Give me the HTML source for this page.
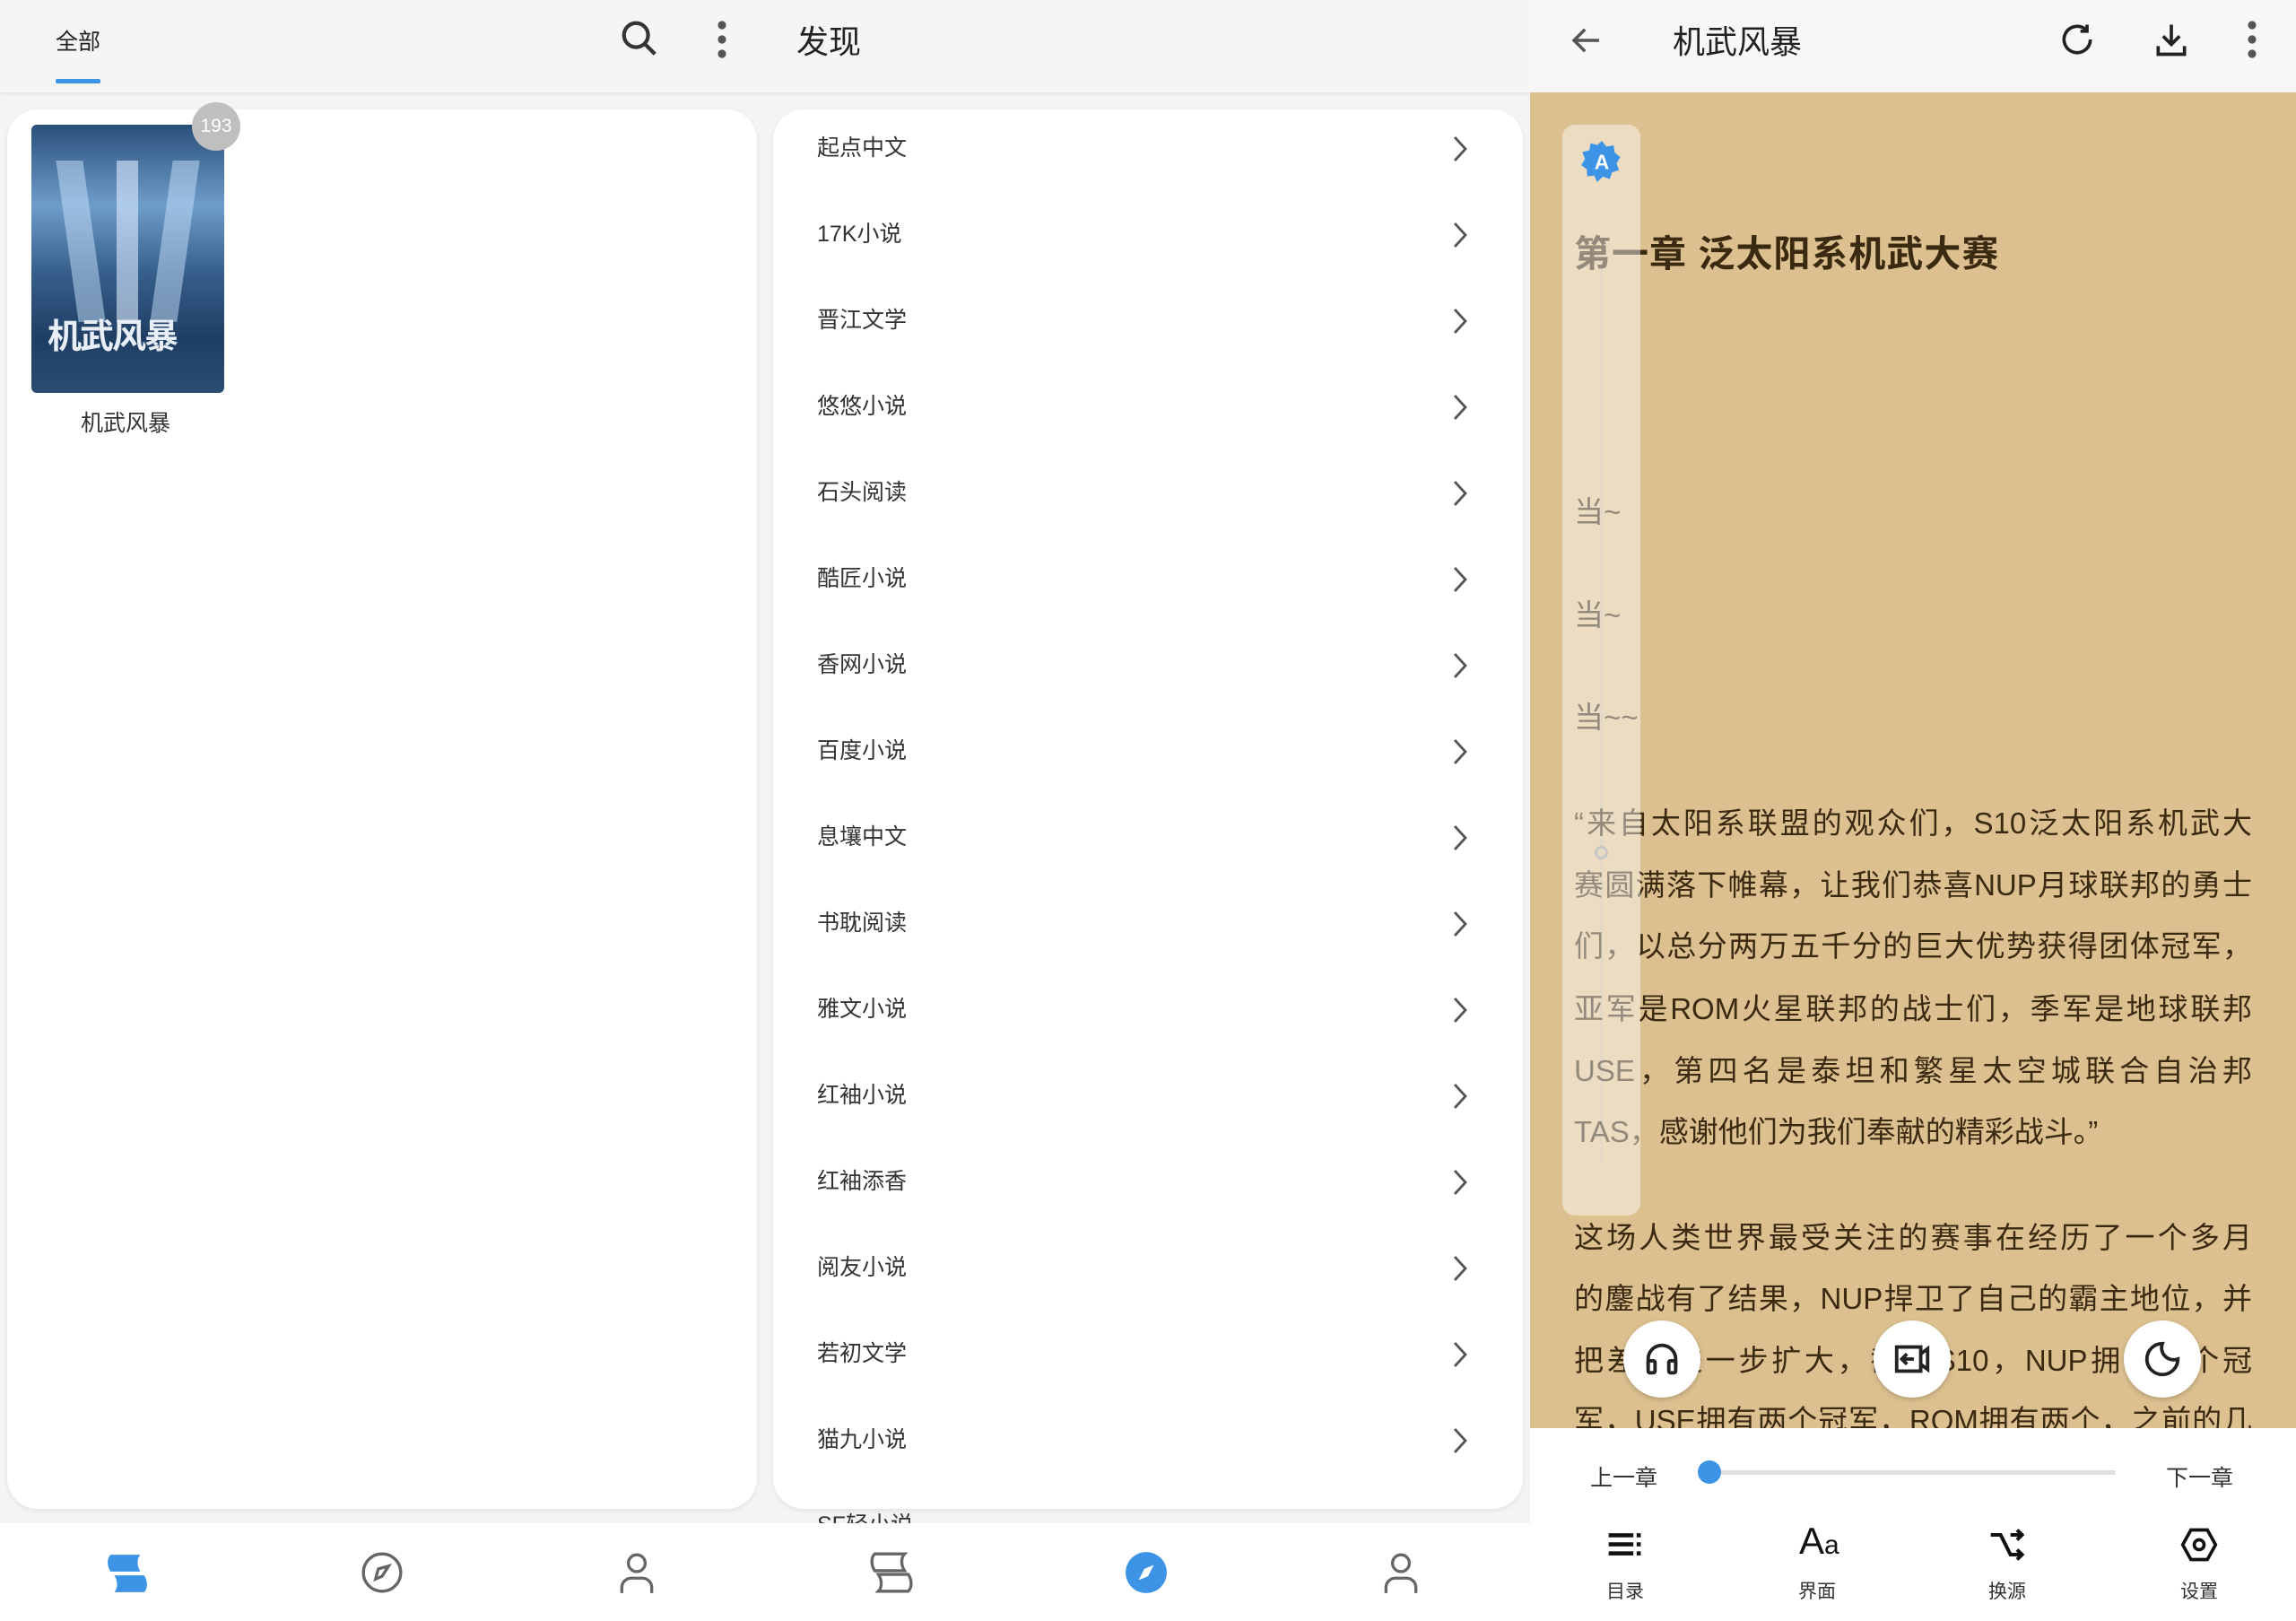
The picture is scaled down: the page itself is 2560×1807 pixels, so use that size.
<!DOCTYPE html>
<html><head><meta charset="utf-8"><style>
*{margin:0;padding:0;box-sizing:border-box}
body{width:2560px;height:1807px;overflow:hidden;background:#f4f4f4;font-family:"Liberation Sans","Noto Sans CJK SC",sans-serif;position:relative;color:#333}
.abs{position:absolute}
.card{position:absolute;background:#fff;border-radius:34px;box-shadow:0 2px 6px rgba(0,0,0,.08)}
.item{position:absolute;left:911px;font-size:25px;color:#333;line-height:30px}
.chev{position:absolute;left:1620px}
.tan{position:absolute;left:1706px;top:103px;width:854px;height:1489px;background:#dcc08f;overflow:hidden}
.ln{position:absolute;left:49px;width:756px;font-size:33px;line-height:40px;color:#3b2a12;text-align:justify;text-align-last:justify;white-space:normal}
.fab{position:absolute;width:86px;height:86px;border-radius:50%;background:#fff;box-shadow:0 2px 6px rgba(0,0,0,.2)}
.lbl{position:absolute;font-size:21px;color:#333;transform:translateX(-50%)}
</style></head><body>
<!-- top bars -->
<div class="abs" style="left:0;top:0;width:1706px;height:103px;background:#f5f5f5;box-shadow:0 2px 4px rgba(0,0,0,.06)"></div>
<div class="abs" style="left:62px;top:27px;font-size:25px;color:#222">全部</div>
<div class="abs" style="left:62px;top:88px;width:50px;height:5px;background:#3d94e6;border-radius:2px"></div>
<svg class="abs" style="left:690px;top:20px" width="46" height="46" viewBox="0 0 24 24" fill="none" stroke="#333" stroke-width="2.2"><circle cx="10" cy="10" r="7"/><path d="M15 15l6 6"/></svg>
<svg class="abs" style="left:795px;top:22px" width="20" height="44" viewBox="0 0 10 22" fill="#555"><circle cx="5" cy="3" r="2.3"/><circle cx="5" cy="11" r="2.3"/><circle cx="5" cy="19" r="2.3"/></svg>
<div class="abs" style="left:888px;top:18px;font-size:36px;color:#222">发现</div>

<div class="abs" style="left:1706px;top:0;width:854px;height:103px;background:#f7f7f7"></div>
<svg class="abs" style="left:1748px;top:24px" width="42" height="42" viewBox="0 0 24 24" fill="none" stroke="#555" stroke-width="2"><path d="M20 12H4M11 5l-7 7 7 7"/></svg>
<div class="abs" style="left:1865px;top:18px;font-size:36px;color:#222">机武风暴</div>
<svg class="abs" style="left:2294px;top:22px" width="44" height="44" viewBox="0 0 24 24" fill="none" stroke="#222" stroke-width="2"><path d="M20 12a8 8 0 1 1-2.5-5.8"/><path d="M18 3v4h-4" /></svg>
<svg class="abs" style="left:2399px;top:22px" width="44" height="44" viewBox="0 0 24 24" fill="none" stroke="#222" stroke-width="2"><path d="M12 3v12M7 10l5 5 5-5M4 16v5h16v-5"/></svg>
<svg class="abs" style="left:2501px;top:22px" width="20" height="44" viewBox="0 0 10 22" fill="#555"><circle cx="5" cy="3" r="2.3"/><circle cx="5" cy="11" r="2.3"/><circle cx="5" cy="19" r="2.3"/></svg>

<!-- left card -->
<div class="card" style="left:8px;top:122px;width:836px;height:1560px"></div>
<div class="abs" style="left:35px;top:139px;width:215px;height:299px;border-radius:6px;background:linear-gradient(180deg,#2a4f7a 0%,#6e9ccb 30%,#375f8c 55%,#1f3e63 80%,#2b4d72 100%);overflow:hidden">
<div class="abs" style="left:40px;top:40px;width:30px;height:180px;background:rgba(200,225,250,.5);transform:skewX(8deg)"></div>
<div class="abs" style="left:95px;top:40px;width:24px;height:180px;background:rgba(220,235,255,.6)"></div>
<div class="abs" style="left:145px;top:40px;width:30px;height:180px;background:rgba(200,225,250,.5);transform:skewX(-8deg)"></div>
<div class="abs" style="left:18px;top:205px;font-size:38px;font-weight:bold;color:#e8eef6;letter-spacing:-2px">机武风暴</div>
</div>
<div class="abs" style="left:214px;top:114px;width:54px;height:54px;border-radius:50%;background:#bfbfbf;color:#fff;font-size:21px;text-align:center;line-height:54px">193</div>
<div class="abs" style="left:90px;top:452px;font-size:25px;color:#333">机武风暴</div>

<!-- right list card -->
<div class="item" style="top:1685px">SF轻小说</div>
<div class="card" style="left:862px;top:122px;width:836px;height:1560px"></div>

<!-- bottom nav -->
<div class="abs" style="left:0;top:1698px;width:1706px;height:109px;background:#fff"></div>
<svg class="abs" style="left:117px;top:1729px" width="50" height="50" viewBox="0 0 24 24" fill="#3d94e6"><path d="M3 2h16c-2 2-2 6 0 9H3c-2-3-2-7 0-9zM5 13h16c2 3 2 7 0 9H5c2-2 2-6 0-9z"/></svg>
<svg class="abs" style="left:401px;top:1728px" width="50" height="50" viewBox="0 0 24 24" fill="none" stroke="#666" stroke-width="1.6"><circle cx="12" cy="12" r="10"/><path d="M15.5 8.5L12 14l-3.5 1.5L10 10z"/></svg>
<svg class="abs" style="left:685px;top:1728px" width="50" height="50" viewBox="0 0 24 24" fill="none" stroke="#666" stroke-width="1.6"><circle cx="12" cy="7" r="4.5"/><path d="M4 23v-3a5 5 0 0 1 5-5h6a5 5 0 0 1 5 5v3"/></svg>
<svg class="abs" style="left:969px;top:1728px" width="50" height="50" viewBox="0 0 24 24" fill="none" stroke="#666" stroke-width="1.6"><path d="M3 2h16c-2 2-2 6 0 9H3c-2-3-2-7 0-9zM5 13h16c2 3 2 7 0 9H5c2-2 2-6 0-9z"/></svg>
<svg class="abs" style="left:1253px;top:1728px" width="50" height="50" viewBox="0 0 24 24"><circle cx="12" cy="12" r="11" fill="#3d94e6"/><path d="M16 8l-3 6-5 2 3-6z" fill="#fff"/></svg>
<svg class="abs" style="left:1537px;top:1728px" width="50" height="50" viewBox="0 0 24 24" fill="none" stroke="#666" stroke-width="1.6"><circle cx="12" cy="7" r="4.5"/><path d="M4 23v-3a5 5 0 0 1 5-5h6a5 5 0 0 1 5 5v3"/></svg>

<!-- reader -->
<div class="tan">
<div class="abs" style="left:78px;top:190px;width:3px;height:1000px;background:rgba(190,180,160,.5)"></div>
<div class="abs" style="left:72px;top:840px;width:15px;height:15px;border-radius:50%;border:3px solid #999"></div>
<div class="abs" style="left:49px;top:146px;font-size:41px;font-weight:bold;color:#3b2a12;letter-spacing:1px">第一章 泛太阳系机武大赛</div>
<div class="abs" style="left:49px;top:441px;font-size:33px;color:#3b2a12">当~</div>
<div class="abs" style="left:49px;top:556px;font-size:33px;color:#3b2a12">当~</div>
<div class="abs" style="left:49px;top:670px;font-size:33px;color:#3b2a12">当~~</div>
<div class="ln" style="top:795px">“来自太阳系联盟的观众们，S10泛太阳系机武大</div>
<div class="ln" style="top:864px">赛圆满落下帷幕，让我们恭喜NUP月球联邦的勇士</div>
<div class="ln" style="top:932px">们，以总分两万五千分的巨大优势获得团体冠军，</div>
<div class="ln" style="top:1002px">亚军是ROM火星联邦的战士们，季军是地球联邦</div>
<div class="ln" style="top:1071px">USE，第四名是泰坦和繁星太空城联合自治邦</div>
<div class="ln" style="top:1139px;text-align:left;text-align-last:left">TAS，感谢他们为我们奉献的精彩战斗。”</div>
<div class="ln" style="top:1257px">这场人类世界最受关注的赛事在经历了一个多月</div>
<div class="ln" style="top:1325px">的鏖战有了结果，NUP捍卫了自己的霸主地位，并</div>
<div class="ln" style="top:1394px">把差距进一步扩大，截至S10，NUP拥有三个冠</div>
<div class="ln" style="top:1461px">军，USE拥有两个冠军，ROM拥有两个，之前的几</div>
<div class="abs" style="left:36px;top:36px;width:87px;height:1216px;border-radius:14px;background:rgba(255,255,255,.45)"></div>
<svg class="abs" style="left:55px;top:52px" width="50" height="50" viewBox="0 0 24 24"><path d="M12 1l2.5 3 3.8-.6.6 3.8 3 2.5-2 3.3 1.3 3.6-3.7 1.2-1.3 3.6-3.6-1.3L9.5 23l-1.6-3.5L4.2 20l-.2-3.8L1 14l2-3.3L1.6 7l3.7-1L6 2.2l3.6 1z" fill="#3d94e6"/><text x="12" y="16" font-size="11" font-family="Liberation Sans" font-weight="bold" fill="#fff" text-anchor="middle">A</text></svg>
</div>
<div class="fab" style="left:1810px;top:1472px"><svg style="margin:20px" width="46" height="46" viewBox="0 0 24 24" fill="none" stroke="#222" stroke-width="2"><path d="M4 17v-5a8 8 0 0 1 16 0v5"/><rect x="4" y="13" width="4" height="7" rx="1"/><rect x="16" y="13" width="4" height="7" rx="1"/></svg></div>
<div class="fab" style="left:2089px;top:1472px"><svg style="margin:20px" width="46" height="46" viewBox="0 0 24 24" fill="none" stroke="#222" stroke-width="2"><path d="M3 5h14v14H3zM17 9l4-3v12l-4-3"/><path d="M13 12H7M9 9l-3 3 3 3"/></svg></div>
<div class="fab" style="left:2368px;top:1472px"><svg style="margin:20px" width="46" height="46" viewBox="0 0 24 24" fill="none" stroke="#222" stroke-width="2"><path d="M12 3a9 9 0 1 0 9 9 7 7 0 0 1-9-9z"/></svg></div>

<div class="abs" style="left:1706px;top:1592px;width:854px;height:215px;background:#fff"></div>
<div class="abs" style="left:1773px;top:1628px;font-size:25px;color:#333">上一章</div>
<div class="abs" style="left:1907px;top:1639px;width:452px;height:5px;background:#e0e0e0;border-radius:3px"></div>
<div class="abs" style="left:1893px;top:1628px;width:26px;height:26px;border-radius:50%;background:#3d94e6"></div>
<div class="abs" style="left:2415px;top:1628px;font-size:25px;color:#333">下一章</div>
<svg class="abs" style="left:1790px;top:1700px" width="44" height="44" viewBox="0 0 24 24" fill="#111"><rect x="2" y="5" width="15" height="2.5"/><rect x="2" y="10.5" width="15" height="2.5"/><rect x="2" y="16" width="15" height="2.5"/><rect x="19" y="5" width="2.5" height="2.5"/><rect x="19" y="10.5" width="2.5" height="2.5"/><rect x="19" y="16" width="2.5" height="2.5"/></svg>
<div class="abs" style="left:2006px;top:1694px;font-size:42px;color:#111;font-family:'Liberation Sans Narrow','Liberation Sans',sans-serif">A<span style="font-size:30px">a</span></div>
<svg class="abs" style="left:2216px;top:1700px" width="44" height="44" viewBox="0 0 24 24" fill="none" stroke="#111" stroke-width="2.2"><path d="M2 6h6l6 12h7M14 6h7M18 3l3 3-3 3M18 15l3 3-3 3"/></svg>
<svg class="abs" style="left:2430px;top:1700px" width="44" height="44" viewBox="0 0 24 24" fill="none" stroke="#111" stroke-width="2"><path d="M7 3h10l5 9-5 9H7l-5-9z"/><circle cx="12" cy="12" r="3"/></svg>
<div class="lbl" style="left:1812px;top:1758px">目录</div>
<div class="lbl" style="left:2026px;top:1758px">界面</div>
<div class="lbl" style="left:2238px;top:1758px">换源</div>
<div class="lbl" style="left:2452px;top:1758px">设置</div>

<div class="item" style="top:150px">起点中文</div>
<div class="item" style="top:246px">17K小说</div>
<div class="item" style="top:342px">晋江文学</div>
<div class="item" style="top:438px">悠悠小说</div>
<div class="item" style="top:534px">石头阅读</div>
<div class="item" style="top:630px">酷匠小说</div>
<div class="item" style="top:726px">香网小说</div>
<div class="item" style="top:822px">百度小说</div>
<div class="item" style="top:918px">息壤中文</div>
<div class="item" style="top:1014px">书耽阅读</div>
<div class="item" style="top:1110px">雅文小说</div>
<div class="item" style="top:1206px">红袖小说</div>
<div class="item" style="top:1302px">红袖添香</div>
<div class="item" style="top:1398px">阅友小说</div>
<div class="item" style="top:1494px">若初文学</div>
<div class="item" style="top:1590px">猫九小说</div>
<svg class="chev" style="top:151px" width="18" height="30" viewBox="0 0 9 15" fill="none" stroke="#555" stroke-width="1.4"><path d="M1 1l6 6.5L1 14"/></svg>
<svg class="chev" style="top:247px" width="18" height="30" viewBox="0 0 9 15" fill="none" stroke="#555" stroke-width="1.4"><path d="M1 1l6 6.5L1 14"/></svg>
<svg class="chev" style="top:343px" width="18" height="30" viewBox="0 0 9 15" fill="none" stroke="#555" stroke-width="1.4"><path d="M1 1l6 6.5L1 14"/></svg>
<svg class="chev" style="top:439px" width="18" height="30" viewBox="0 0 9 15" fill="none" stroke="#555" stroke-width="1.4"><path d="M1 1l6 6.5L1 14"/></svg>
<svg class="chev" style="top:535px" width="18" height="30" viewBox="0 0 9 15" fill="none" stroke="#555" stroke-width="1.4"><path d="M1 1l6 6.5L1 14"/></svg>
<svg class="chev" style="top:631px" width="18" height="30" viewBox="0 0 9 15" fill="none" stroke="#555" stroke-width="1.4"><path d="M1 1l6 6.5L1 14"/></svg>
<svg class="chev" style="top:727px" width="18" height="30" viewBox="0 0 9 15" fill="none" stroke="#555" stroke-width="1.4"><path d="M1 1l6 6.5L1 14"/></svg>
<svg class="chev" style="top:823px" width="18" height="30" viewBox="0 0 9 15" fill="none" stroke="#555" stroke-width="1.4"><path d="M1 1l6 6.5L1 14"/></svg>
<svg class="chev" style="top:919px" width="18" height="30" viewBox="0 0 9 15" fill="none" stroke="#555" stroke-width="1.4"><path d="M1 1l6 6.5L1 14"/></svg>
<svg class="chev" style="top:1015px" width="18" height="30" viewBox="0 0 9 15" fill="none" stroke="#555" stroke-width="1.4"><path d="M1 1l6 6.5L1 14"/></svg>
<svg class="chev" style="top:1111px" width="18" height="30" viewBox="0 0 9 15" fill="none" stroke="#555" stroke-width="1.4"><path d="M1 1l6 6.5L1 14"/></svg>
<svg class="chev" style="top:1207px" width="18" height="30" viewBox="0 0 9 15" fill="none" stroke="#555" stroke-width="1.4"><path d="M1 1l6 6.5L1 14"/></svg>
<svg class="chev" style="top:1303px" width="18" height="30" viewBox="0 0 9 15" fill="none" stroke="#555" stroke-width="1.4"><path d="M1 1l6 6.5L1 14"/></svg>
<svg class="chev" style="top:1399px" width="18" height="30" viewBox="0 0 9 15" fill="none" stroke="#555" stroke-width="1.4"><path d="M1 1l6 6.5L1 14"/></svg>
<svg class="chev" style="top:1495px" width="18" height="30" viewBox="0 0 9 15" fill="none" stroke="#555" stroke-width="1.4"><path d="M1 1l6 6.5L1 14"/></svg>
<svg class="chev" style="top:1591px" width="18" height="30" viewBox="0 0 9 15" fill="none" stroke="#555" stroke-width="1.4"><path d="M1 1l6 6.5L1 14"/></svg>
</body></html>
